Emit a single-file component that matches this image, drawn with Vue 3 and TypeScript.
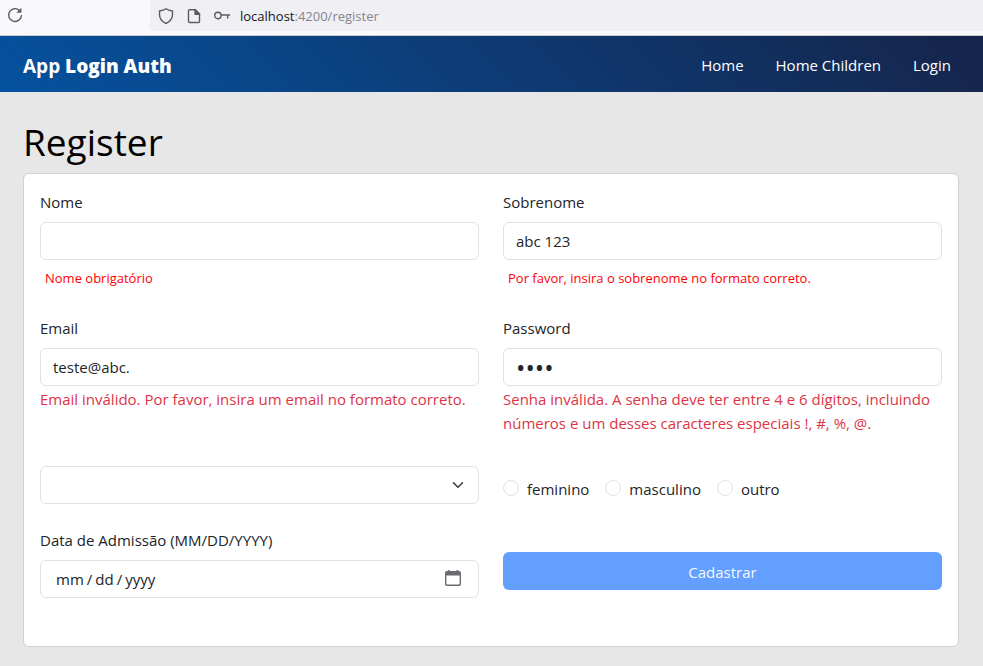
<script setup lang="ts">
import { reactive } from 'vue'

interface NavLink {
  label: string
  href: string
}

const links: NavLink[] = [
  { label: 'Home', href: '#home' },
  { label: 'Home Children', href: '#home-children' },
  { label: 'Login', href: '#login' },
]

const genders: string[] = ['feminino', 'masculino', 'outro']

const form = reactive({
  nome: '',
  sobrenome: 'abc 123',
  email: 'teste@abc.',
  password: '1234',
  option: '',
  gender: '',
  admissao: '',
})
</script>

<template>
  <div class="browser-bar">
    <button class="tool reload" type="button" aria-label="Reload">
      <svg width="16" height="16" viewBox="0 0 16 16" fill="none" stroke="#5b5b66" stroke-width="1.4" stroke-linecap="round">
        <path d="M12.600 3.600A6.400 6.400 0 1 0 14.400 8.600" />
        <path d="M14.400 .8v5H9.400z" fill="#5b5b66" stroke="none" />
      </svg>
    </button>
    <div class="address">
      <div class="site-icons">
        <svg width="16" height="16" viewBox="0 0 16 16" fill="none" stroke="#5b5b66" stroke-width="1.4" stroke-linejoin="round">
          <path d="M8 .8c1.700 1.300 4 1.900 6.500 2.200v3.500c0 3.900-2.600 7.200-6.500 9-3.900-1.800-6.500-5.100-6.500-9V3C4 2.700 6.300 2.100 8 .8z" />
        </svg>
        <svg width="16" height="16" viewBox="0 0 16 16" fill="none" stroke="#5b5b66" stroke-width="1.4" stroke-linejoin="round">
          <path d="M3.500 1.700h5.800l4.200 4.200v7.400a1.200 1.200 0 0 1-1.200 1.200H3.700a1.200 1.200 0 0 1-1.200-1.200V2.700a1 1 0 0 1 1-1z" />
          <path d="M9 1.500v4.700h4.700z" fill="#5b5b66" />
        </svg>
        <svg width="16" height="16" viewBox="0 0 16 16" fill="none" stroke="#5b5b66" stroke-width="1.400">
          <circle cx="3.900" cy="7.500" r="3.200" />
          <path d="M7.100 7H16M13.700 7v3.500" />
        </svg>
      </div>
      <span class="url"><b>localhost</b>:4200/register</span>
    </div>
  </div>

  <header class="navbar">
    <a class="brand" href="#home">App <strong>Login Auth</strong></a>
    <nav>
      <a v-for="link in links" :key="link.label" :href="link.href">{{ link.label }}</a>
    </nav>
  </header>

  <main>
    <h1>Register</h1>
    <form class="card" @submit.prevent>
      <div class="field named">
        <label for="nome">Nome</label>
        <input id="nome" v-model="form.nome" class="control" type="text" />
        <p class="hint">Nome obrigatório</p>
      </div>
      <div class="field named">
        <label for="sobrenome">Sobrenome</label>
        <input id="sobrenome" v-model="form.sobrenome" class="control" type="text" />
        <p class="hint">Por favor, insira o sobrenome no formato correto.</p>
      </div>

      <div class="field">
        <label for="email">Email</label>
        <input id="email" v-model="form.email" class="control" type="text" />
        <p class="error">Email inválido. Por favor, insira um email no formato correto.</p>
      </div>
      <div class="field">
        <label for="password">Password</label>
        <input id="password" v-model="form.password" class="control password" type="password" />
        <p class="error">Senha inválida. A senha deve ter entre 4 e 6 dígitos, incluindo números e um desses caracteres especiais !, #, %, @.</p>
      </div>

      <div class="picker">
        <select v-model="form.option" class="control" aria-label="Selecione">
          <option value=""></option>
        </select>
        <svg class="chevron" width="12" height="12" viewBox="0 0 16 16" fill="none" stroke="#343a40" stroke-width="2" stroke-linecap="round" stroke-linejoin="round">
          <path d="m2 5 6 6 6-6" />
        </svg>
      </div>
      <div class="radios">
        <label v-for="gender in genders" :key="gender">
          <input v-model="form.gender" type="radio" name="gender" :value="gender" />
          <span>{{ gender }}</span>
        </label>
      </div>

      <div class="field">
        <label for="admissao">Data de Admissão (MM/DD/YYYY)</label>
        <div class="picker">
          <input id="admissao" v-model="form.admissao" class="control date" type="date" />
          <svg class="calendar" width="16" height="16" viewBox="0 0 16 16" fill="#6c6c70">
            <path d="M2.800 0h1.700v1h7V0h1.700v1h.8a2 2 0 0 1 2 2v11a2 2 0 0 1-2 2H2a2 2 0 0 1-2-2V3a2 2 0 0 1 2-2h.8zM1.400 5.400v8.200a1 1 0 0 0 1 1h11.200a1 1 0 0 0 1-1V5.400z" fill-rule="evenodd" />
          </svg>
        </div>
      </div>
      <button class="submit" type="submit" disabled>Cadastrar</button>
    </form>
  </main>
</template>

<style>
body {
  margin: 0;
  background: #e7e7e7;
}
</style>

<style scoped>
.browser-bar,
.navbar,
main {
  box-sizing: border-box;
  font-family: "Segoe UI", "Open Sans", "Noto Sans", sans-serif;
  font-size: 15px;
  line-height: 24px;
  color: #212529;
}

.browser-bar {
  display: flex;
  height: 36px;
  background: #f9f9fb;
  border-bottom: 1px solid #cccccf;
}

.tool {
  display: flex;
  width: 150px;
  padding: 7px;
  border: 0;
  background: none;
}

.address {
  display: flex;
  flex: 1;
  align-items: center;
  gap: 10px;
  height: 31px;
  padding-left: 8px;
  border-radius: 0 0 0 4px;
  background: #f0f0f4;
}

.site-icons {
  display: flex;
  gap: 12px;
}

.url {
  font-size: 13px;
  color: #85858c;
}

.url b {
  font-weight: 400;
  color: #15141a;
}

.navbar {
  display: flex;
  align-items: center;
  justify-content: space-between;
  height: 56px;
  padding: 2px 32px 0 23px;
  background: linear-gradient(45deg, #05529f, #16244a);
}

.navbar a {
  color: #fff;
  text-decoration: none;
}

.navbar nav {
  display: flex;
  gap: 32px;
}

.navbar .brand {
  padding-top: 2px;
  font-size: 19px;
  font-weight: 700;
}

.brand strong {
  font-weight: 800;
}

main {
  padding: 26px 24px 19px 23px;
}

h1 {
  margin: 0;
  padding-bottom: 7px;
  font-size: 37px;
  line-height: 48px;
  font-weight: 400;
  color: #000;
}

.card {
  display: grid;
  grid-template-columns: 1fr 1fr;
  grid-template-rows: 126px 150px 62px auto;
  column-gap: 24px;
  padding: 16px 16px 48px;
  border: 1px solid #d0d0d0;
  border-radius: 6px;
  background: #fff;
}

.field {
  display: flex;
  flex-direction: column;
}

.field > label {
  margin-bottom: 8px;
}

.control {
  box-sizing: border-box;
  width: 100%;
  height: 38px;
  padding: 6px 12px;
  border: 1px solid #dee2e6;
  border-radius: 6px;
  background: #fff;
  font: inherit;
  color: #212529;
  appearance: none;
}

.password {
  font-size: 25px;
}

.hint {
  margin: 8px 0 0;
  padding-left: 5px;
  font-size: 13px;
  line-height: 21px;
  color: #f00;
}

.error {
  margin: 1px 0 0;
  color: #dc3545;
}

.picker {
  display: flex;
  position: relative;
}

.chevron,
.calendar {
  position: absolute;
  pointer-events: none;
}

.chevron {
  top: 13px;
  right: 15px;
}

.calendar {
  top: 10px;
  right: 18px;
}

.date {
  padding-left: 14px;
}

.date::-webkit-datetime-edit-text {
  padding: 0 2px;
}

.date::-webkit-calendar-picker-indicator {
  opacity: 0;
}

.radios {
  display: flex;
  gap: 16px;
  padding-top: 11px;
}

.radios label {
  display: flex;
  align-items: flex-start;
  gap: 8px;
}

.radios input {
  width: 16px;
  height: 16px;
  margin: 3px 0 0;
  border: 1px solid #dee2e6;
  border-radius: 50%;
  background: #fff;
  appearance: none;
}

.radios input:checked {
  border: 5px solid #0d6efd;
}

.submit {
  height: 38px;
  margin-top: 24px;
  padding-top: 3px;
  border: 0;
  border-radius: 6px;
  background: #629fff;
  font: inherit;
  color: #f3f8ff;
}
</style>
